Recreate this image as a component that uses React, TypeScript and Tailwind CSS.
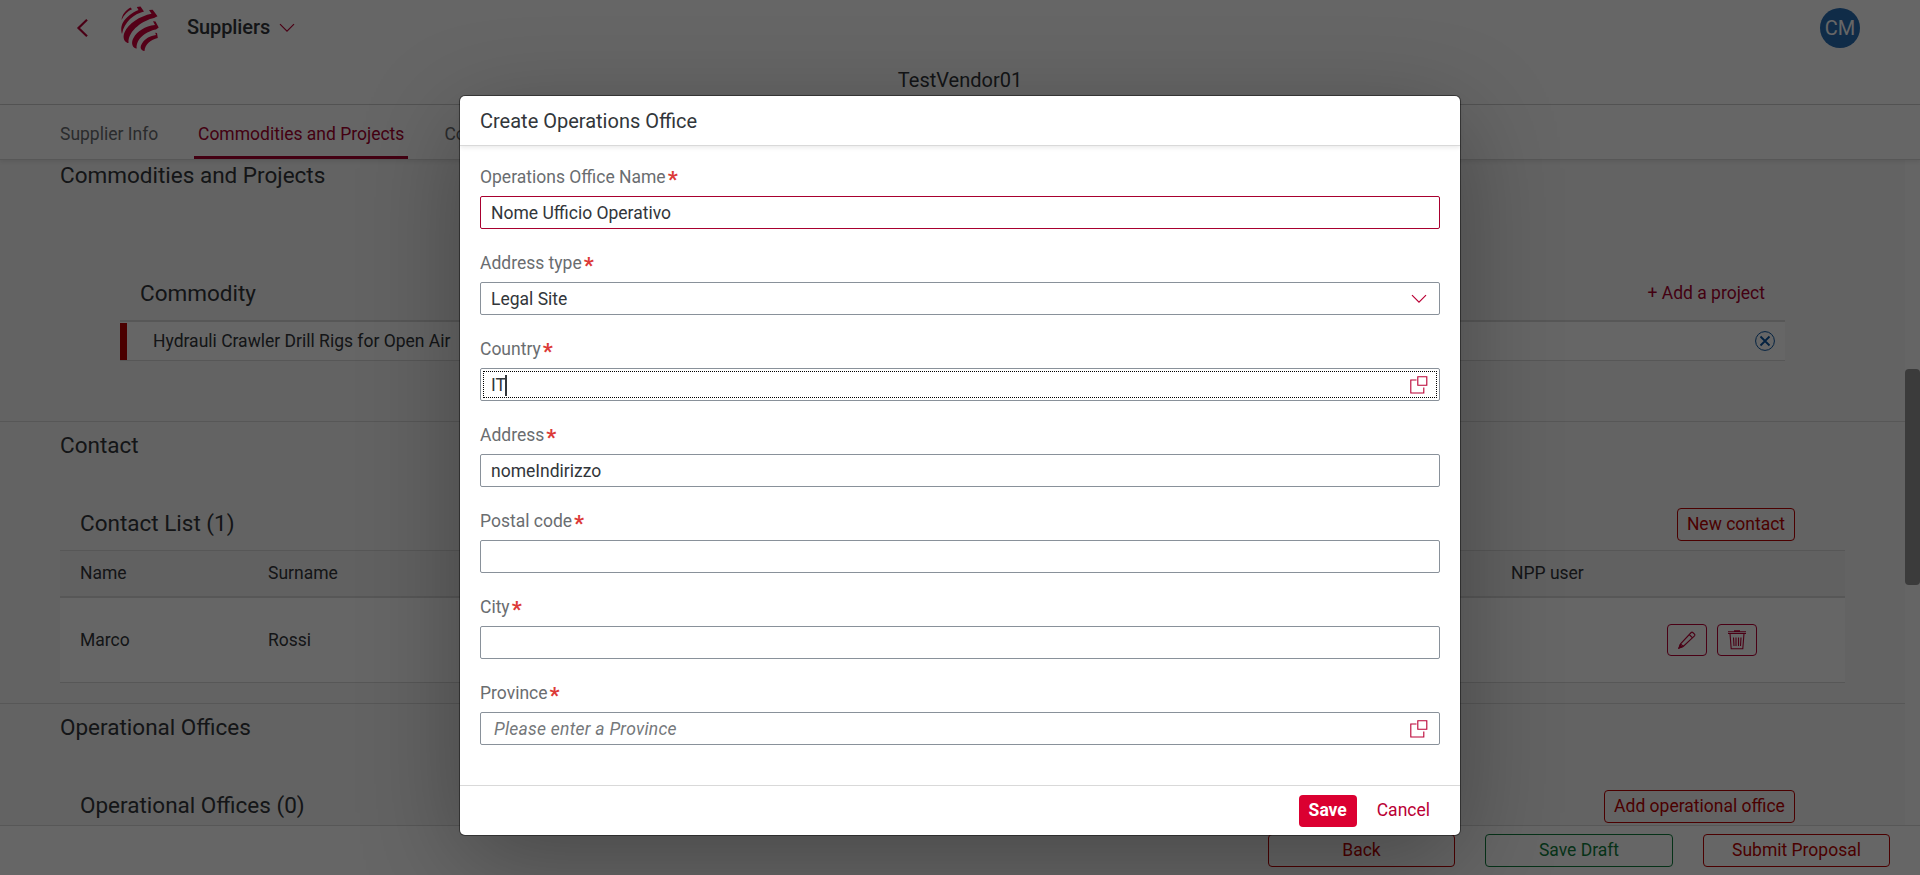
import React from "react";

const LINE = "border-[#d9d9d9]";

function Chevron({ className = "" }: { className?: string }) {
  return (
    <svg className={className} width="16" height="10" viewBox="0 0 16 10" fill="none">
      <path d="M1 1.2 8 8.2 15 1.2" stroke="#ba0035" strokeWidth="1.2" />
    </svg>
  );
}

function Logo() {
  return (
    <svg className="overflow-visible" width="40" height="46" viewBox="0 0 40 46" fill="#d1003b">
      <path d="M1.500 15C2.300 9 6 5 10.500 2.500L12 4.300C8 6 4 9.500 1.500 15z" />
      <path d="M2 29C.5 24 1.500 20 3 17.500 6 12.300 12 7.500 18.500 5L16.800 2l3.700-.4 3.500 5C14 9 4 17 2 29z" />
      <path d="M7.500 38C3 36 3 31 4.500 27.500 8 18.500 20 11 31.500 8.700L29 5l3.700-.2 4.800 6.400L34 13C24 15 8 25 8.500 38z" />
      <path d="M16 43.500C11 42 11.500 36 13.500 33 17 26.500 25 21 35 20l-2-3.800 2.500.3 3.200 6L36 24.500C27 26 16 33 16.700 43.500z" />
      <path d="M24 46C20 45 20 41.500 22 38.500 25.500 33 30 31 36 30l-.8-2.200 1.800.2.800 5C31 34.500 25 39 24.500 46z" />
    </svg>
  );
}

function ValueHelp() {
  return (
    <svg width="18" height="18" viewBox="0 0 18 18" fill="none" stroke="#ba0035" strokeWidth="1.1">
      <path d="M6.500 4H.8v13h13v-5.500" />
      <path d="M7.800.8h9v8.400h-9z" />
    </svg>
  );
}

function Field({ label, children, className = "border-[#89919a]" }: { label: string; children?: React.ReactNode; className?: string }) {
  return (
    <div className="h-[86px]">
      <div className="flex h-[36px] items-start pt-[7px] text-[17.5px] leading-[20px] text-[#6a6d70]">
        {label}
        <span className="ml-[2px] text-[22px] font-bold leading-[26px] text-[#dc3a38]">*</span>
      </div>
      <div className={"flex h-[33px] items-center justify-between rounded-[2px] border bg-white pl-[10px] pr-[11px] pt-px text-[17.5px] text-[#32363a] " + className}>
        {children}
      </div>
    </div>
  );
}

function OutlineButton({ children, className }: { children: React.ReactNode; className: string }) {
  return <div className={"flex items-center justify-center rounded-[4px] border text-[17.5px] " + className}>{children}</div>;
}

function Page() {
  return (
    <div className="flex h-[875px] w-[1920px] flex-col bg-[#f7f7f7] text-[#32363a]">
      <header className="h-[105px] shrink-0 border-b border-[#d0d0d0] bg-white">
        <div className="flex h-[56px] items-center pl-[76px] pr-[60px]">
          <svg width="14" height="20" viewBox="0 0 14 20" fill="none">
            <path d="M11 1.8 2.5 10 11 18.2" stroke="#ba0035" strokeWidth="2.2" />
          </svg>
          <div className="ml-[30px]"><Logo /></div>
          <div className="ml-[27px] pb-[2px] text-[20px] font-medium tracking-[-0.1px]">Suppliers</div>
          <Chevron className="ml-[9px]" />
          <div className="ml-auto flex size-[40px] items-center justify-center rounded-full bg-[#286eb4] text-[20px] text-white">CM</div>
        </div>
        <div className="flex h-[48px] items-center justify-center text-[20px]">TestVendor01</div>
      </header>
      <nav className={"relative flex h-[55px] shrink-0 border-b bg-white pl-[60px] text-[17.5px] leading-[58px] text-[#6a6d70] shadow-[0_2px_4px_rgba(0,0,0,0.08)] " + LINE}>
        <span className="w-[134px]">Supplier Info</span>
        <span className="mr-[36px] h-[54px] border-b-[3px] border-[#a8002f] px-[4px] text-[#a8002f]">Commodities and Projects</span>
        <span>Co</span>
      </nav>
      <div className="flex h-[665px] shrink-0">
        <main className="flex w-[1905px] flex-col overflow-hidden">
          <section className={"h-[262px] shrink-0 border-b " + LINE}>
            <h2 className="h-[31px] pl-[60px] text-[22.5px] leading-[30px]">Commodities and Projects</h2>
            <div className="ml-[120px] mt-[73px] w-[1665px]">
              <div className="flex h-[56px] items-center justify-between pl-[20px] pr-[20px] pt-[2px]">
                <h3 className="pt-[2px] text-[22.5px]">Commodity</h3>
                <span className="text-[17.5px] text-[#a8002f]">+ Add a project</span>
              </div>
              <div className={"flex h-[41px] border-b border-t-2 bg-white pt-[1px] " + LINE}>
                <div className="w-[7px] bg-[#bb0000]" />
                <div className="flex flex-1 items-center justify-between pl-[26px] pr-[10px] text-[17.5px]">
                  Hydrauli Crawler Drill Rigs for Open Air
                  <svg className="mb-[2px]" width="20" height="20" viewBox="0 0 20 20" fill="none" stroke="#0854a0">
                    <circle cx="10" cy="10" r="9.4" />
                    <path d="m5.5 5.5 9 9m0-9-9 9" strokeWidth="1.8" />
                  </svg>
                </div>
              </div>
            </div>
          </section>
          <section className={"h-[282px] shrink-0 border-b " + LINE}>
            <h2 className="h-[78px] pl-[60px] text-[22.5px] leading-[46px]">Contact</h2>
            <div className="ml-[60px] w-[1785px]">
              <div className="flex h-[50px] items-center justify-between pb-[2px] pl-[20px] pr-[50px]">
                <h3 className="text-[22.5px]">Contact List (1)</h3>
                <OutlineButton className="h-[33px] w-[118px] border-[#bb0000] text-[#bb0000]">New contact</OutlineButton>
              </div>
              <div className={"grid h-[48px] grid-cols-[188px_1243px_1fr] items-center border-b-2 border-t bg-[#f2f2f2] pl-[20px] text-[17.5px] " + LINE}>
                <span>Name</span>
                <span>Surname</span>
                <span>NPP user</span>
              </div>
              <div className={"grid h-[85px] grid-cols-[188px_1339px_1fr] items-center border-b bg-white pl-[20px] pt-px text-[17.5px] " + LINE}>
                <span>Marco</span>
                <span>Rossi</span>
                <div className="flex gap-[10px] pb-[2px] pl-[60px]">
                  <OutlineButton className="h-[32px] w-[40px] border-[#ba0035]">
                    <svg width="18" height="18" viewBox="0 0 18 18" fill="none" stroke="#ba0035" strokeWidth="1.1">
                      <path d="M1 17l1.600-4.200L13.200 1.500c.5-.5 1.100-.5 1.600 0l1.700 1.700c.5.5.5 1.100 0 1.600L5.200 15.400zM11.200 3.500l3.300 3.300M2.600 12.800l2.600 2.600" />
                      <path d="M1 17l1.100-3 1.900 1.900z" fill="#ba0035" />
                    </svg>
                  </OutlineButton>
                  <OutlineButton className="h-[32px] w-[40px] border-[#ba0035]">
                    <svg width="18" height="20" viewBox="0 0 18 20" fill="none" stroke="#ba0035" strokeWidth="1.1">
                      <path d="M0 3.500h18M0 1.800h18M6 .8h6M2 3.500 3.200 18.800h11.600L16 3.500M5.500 7.500l.5 8.500M8 7.500V16M10.500 7.500V16M13 7.500 12.500 16" />
                    </svg>
                  </OutlineButton>
                </div>
              </div>
            </div>
          </section>
          <section>
            <h2 className="h-[78px] pl-[60px] text-[22.5px] leading-[46px]">Operational Offices</h2>
            <div className="flex h-[50px] items-center justify-between pb-[2px] pl-[80px] pr-[110px]">
              <h3 className="text-[22.5px]">Operational Offices (0)</h3>
              <OutlineButton className="h-[33px] w-[191px] border-[#bb0000] text-[#bb0000]">Add operational office</OutlineButton>
            </div>
          </section>
        </main>
        <div className="w-[15px] bg-[#fcfcfc] pt-[209px]">
          <div className="h-[216px] rounded-[4px] bg-[#949494]" />
        </div>
      </div>
      <footer className={"flex h-[50px] shrink-0 justify-end gap-[30px] border-t bg-white pr-[30px] pt-[8px] " + LINE}>
        <OutlineButton className="h-[33px] w-[187px] border-[#bb0000] text-[#bb0000]">Back</OutlineButton>
        <OutlineButton className="h-[33px] w-[188px] border-[#107e3e] text-[#107e3e]">Save Draft</OutlineButton>
        <OutlineButton className="h-[33px] w-[187px] border-[#bb0000] text-[#bb0000]">Submit Proposal</OutlineButton>
      </footer>
    </div>
  );
}

function Dialog() {
  return (
    <div className="flex h-[739px] w-[1000px] flex-col overflow-visible rounded-[5px] bg-white text-[#32363a] shadow-[0_0_0_1px_rgba(0,0,0,0.42),0_25px_100px_0_rgba(0,0,0,0.3)]">
      <div className="flex h-[50px] shrink-0 items-center rounded-t-[5px] border-b border-[#d9d9d9] px-[20px] text-[20px] shadow-[0_2px_4px_rgba(0,0,0,0.08)]">
        Create Operations Office
      </div>
      <div className="flex-1 px-[20px] pt-[14px]">
        <Field label="Operations Office Name" className="border-[#a8002f]">Nome Ufficio Operativo</Field>
        <Field label="Address type">
          Legal Site
          <Chevron className="mr-px" />
        </Field>
        <Field label="Country" className="relative border-[#89919a]">
          <span className="flex items-center">
            IT
            <span className="-ml-px h-[21px] w-[2px] bg-[#32363a]" />
          </span>
          <ValueHelp />
          <span className="absolute inset-[2px] border border-dotted border-black" />
        </Field>
        <Field label="Address">nomeIndirizzo</Field>
        <Field label="Postal code" />
        <Field label="City" />
        <Field label="Province">
          <span className="pl-[3px] italic tracking-[0.25px] text-[#74777a]">Please enter a Province</span>
          <ValueHelp />
        </Field>
      </div>
      <div className="flex h-[50px] shrink-0 items-center justify-end border-t border-[#d9d9d9] pr-[30px] text-[17.5px]">
        <span className="flex h-[32px] w-[58px] items-center justify-center rounded-[4px] bg-[#db0031] font-bold text-white">Save</span>
        <span className="ml-[20px] text-[#ba0035]">Cancel</span>
      </div>
    </div>
  );
}

export default function App() {
  return (
    <div className="relative h-[875px] w-[1920px] overflow-hidden font-['Roboto',sans-serif]">
      <Page />
      <div className="absolute inset-0 flex items-start justify-center bg-black/60 pt-[96px]">
        <Dialog />
      </div>
    </div>
  );
}
